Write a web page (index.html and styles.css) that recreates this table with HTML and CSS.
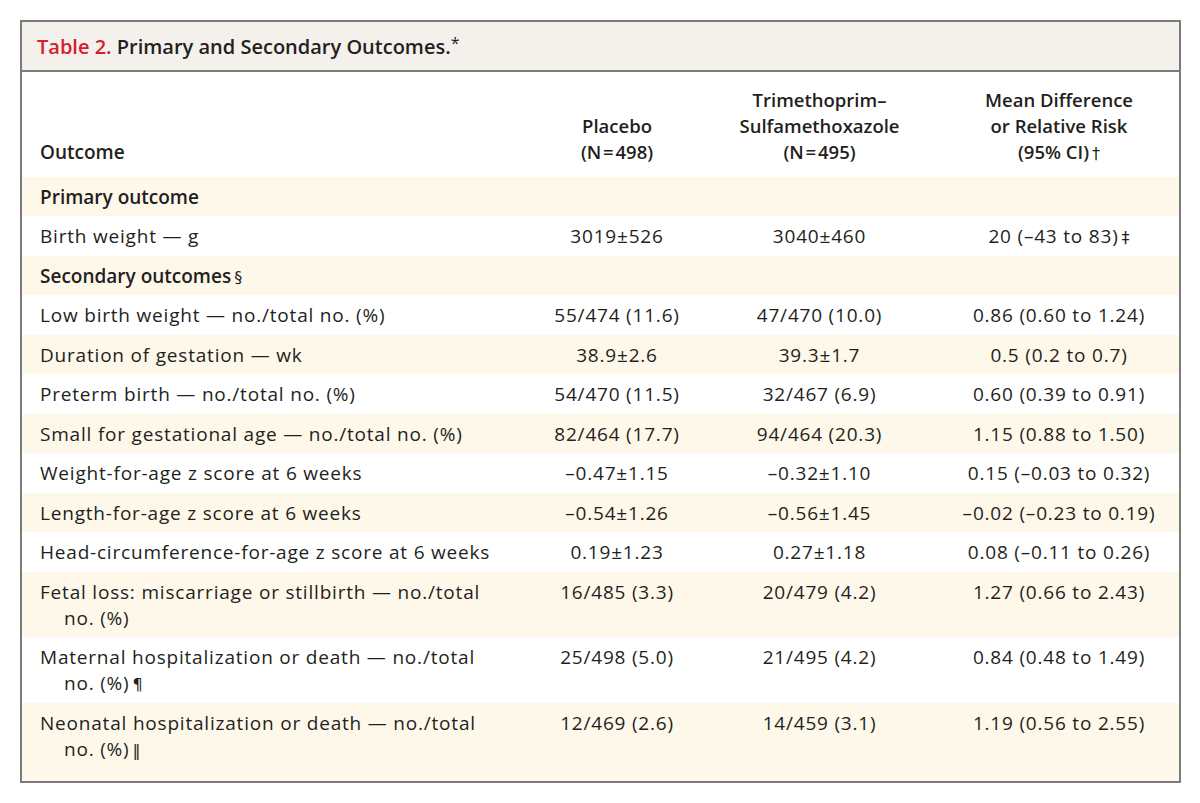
FILE: index.html
```html
<!DOCTYPE html>
<html lang="en">
<head>
<meta charset="utf-8">
<title>Table 2. Primary and Secondary Outcomes</title>
<link rel="stylesheet" href="styles.css">
</head>
<body>
<div class="box">
  <div class="caption"><span class="label">Table 2.</span> Primary and Secondary Outcomes.<span class="star">*</span></div>
  <table class="data">
    <colgroup>
      <col class="c1"><col class="c2"><col class="c3"><col class="c4">
    </colgroup>
    <thead>
      <tr>
        <th class="name">Outcome</th>
        <th>Placebo<br>(N&#8202;=&#8202;498)</th>
        <th>Trimethoprim–<br>Sulfamethoxazole<br>(N&#8202;=&#8202;495)</th>
        <th class="last">Mean Difference<br>or Relative Risk<br>(95% CI)<span class="mark">†</span></th>
      </tr>
    </thead>
    <tbody>
      <tr class="alt section"><td class="name">Primary outcome</td><td></td><td></td><td class="last"></td></tr>
      <tr><td class="name">Birth weight — g</td><td>3019±526</td><td>3040±460</td><td class="last">20 (–43 to 83)<span class="mark">‡</span></td></tr>
      <tr class="alt section"><td class="name">Secondary outcomes<span class="mark">§</span></td><td></td><td></td><td class="last"></td></tr>
      <tr><td class="name">Low birth weight — no./total no. (%)</td><td>55/474 (11.6)</td><td>47/470 (10.0)</td><td class="last">0.86 (0.60 to 1.24)</td></tr>
      <tr class="alt"><td class="name">Duration of gestation — wk</td><td>38.9±2.6</td><td>39.3±1.7</td><td class="last">0.5 (0.2 to 0.7)</td></tr>
      <tr><td class="name">Preterm birth — no./total no. (%)</td><td>54/470 (11.5)</td><td>32/467 (6.9)</td><td class="last">0.60 (0.39 to 0.91)</td></tr>
      <tr class="alt"><td class="name">Small for gestational age — no./total no. (%)</td><td>82/464 (17.7)</td><td>94/464 (20.3)</td><td class="last">1.15 (0.88 to 1.50)</td></tr>
      <tr><td class="name">Weight-for-age z score at 6 weeks</td><td>–0.47±1.15</td><td>–0.32±1.10</td><td class="last">0.15 (–0.03 to 0.32)</td></tr>
      <tr class="alt"><td class="name">Length-for-age z score at 6 weeks</td><td>–0.54±1.26</td><td>–0.56±1.45</td><td class="last">–0.02 (–0.23 to 0.19)</td></tr>
      <tr><td class="name">Head-circumference-for-age z score at 6 weeks</td><td>0.19±1.23</td><td>0.27±1.18</td><td class="last">0.08 (–0.11 to 0.26)</td></tr>
      <tr class="alt"><td class="name">Fetal loss: miscarriage or stillbirth — no./total <span class="nw">no. (%)</span></td><td>16/485 (3.3)</td><td>20/479 (4.2)</td><td class="last">1.27 (0.66 to 2.43)</td></tr>
      <tr><td class="name">Maternal hospitalization or death — no./total <span class="nw">no. (%)<span class="mark">¶</span></span></td><td>25/498 (5.0)</td><td>21/495 (4.2)</td><td class="last">0.84 (0.48 to 1.49)</td></tr>
      <tr class="alt final"><td class="name">Neonatal hospitalization or death — no./total <span class="nw">no. (%)<span class="mark">‖</span></span></td><td>12/469 (2.6)</td><td>14/459 (3.1)</td><td class="last">1.19 (0.56 to 2.55)</td></tr>
    </tbody>
  </table>
</div>
</body>
</html>
```
FILE: styles.css
```css
html, body {
  margin: 0;
  padding: 0;
  background: #ffffff;
}
body {
  padding: 20px 0 0 20px;
  font-family: "Open Sans", "Liberation Sans", sans-serif;
  color: #231f20;
}
.box {
  width: 1157px;
  border: 2px solid #7b7b7b;
  background: #ffffff;
}
.caption {
  background: #f4f1ec;
  border-bottom: 2px solid #7b7b7b;
  height: 50px;
  box-sizing: border-box;
  padding: 12px 0 0 15px;
  font-size: 20px;
  line-height: 26px;
  font-weight: 600;
  color: #231f20;
}
.caption .label {
  color: #d3202f;
}
.caption .star {
  font-weight: 400;
  font-size: 16px;
  line-height: 0;
  vertical-align: 5px;
}
.data {
  width: 1157px;
  table-layout: fixed;
  border-collapse: collapse;
  font-size: 19px;
  line-height: 26px;
}
.c1 { width: 490px; }
.c2 { width: 210px; }
.c3 { width: 195px; }
.c4 { width: 262px; }
.data th {
  font-weight: 600;
  text-align: center;
  vertical-align: bottom;
  padding: 15px 0 11.5px 0;
  font-size: 18.5px;
  line-height: 26px;
}
.data th.name {
  text-align: left;
  padding-left: 18px;
  font-size: 19px;
}
.data td {
  text-align: center;
  vertical-align: top;
  padding: 7px 0 6.5px 0;
  letter-spacing: 0.8px;
}
.data td.name {
  text-align: left;
  padding-left: 42px;
  padding-right: 17px;
  text-indent: -24px;
}
.data .last {
  padding-left: 22px;
}
.data tr.alt td {
  background: #fef8eb;
}
.data tr.section td.name {
  font-weight: 600;
  letter-spacing: 0;
}
.data tr.final td {
  padding-bottom: 19px;
}
.nw {
  white-space: nowrap;
}
.mark {
  font-family: "DejaVu Sans", sans-serif;
  font-weight: 400;
  font-size: 16px;
  line-height: 0;
  padding-left: 3px;
  letter-spacing: 0;
}
```
